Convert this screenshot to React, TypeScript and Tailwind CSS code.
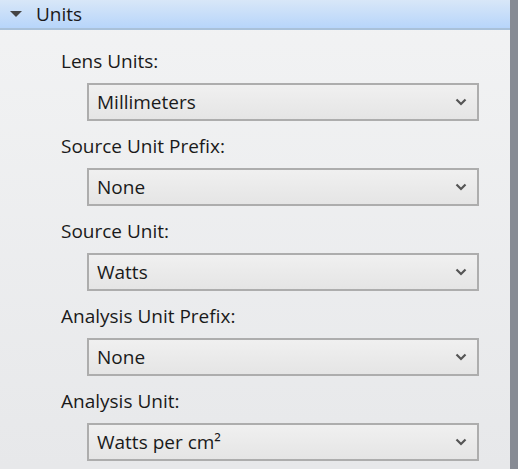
import React from 'react';

const fields = [
  { label: 'Lens Units:', value: 'Millimeters' },
  { label: 'Source Unit Prefix:', value: 'None' },
  { label: 'Source Unit:', value: 'Watts' },
  { label: 'Analysis Unit Prefix:', value: 'None' },
  { label: 'Analysis Unit:', value: 'Watts per cm²' },
];

function Chevron() {
  return (
    <svg width="12" height="8" viewBox="0 0 12 8" className="shrink-0">
      <path d="M1.5 1.5 L6 6 L10.5 1.5" fill="none" stroke="#555" strokeWidth="2.2" />
    </svg>
  );
}

export default function App() {
  return (
    <div
      className="flex h-[469px] w-[518px] overflow-hidden text-[#1a1a1a]"
      style={{ fontFamily: '"Open Sans", "Noto Sans", sans-serif' }}
    >
      <div className="flex min-w-0 flex-1 flex-col bg-gradient-to-b from-[#f2f3f4] to-[#e7e8ea]">
        {/* header */}
        <div className="flex h-[30px] shrink-0 items-center border-b-2 border-[#a9c1d9] bg-gradient-to-b from-[#d8e7f8] to-[#b7d5fa]">
          <svg width="12" height="6" viewBox="0 0 12 6" className="ml-[10px]">
            <path d="M0 0 L12 0 L6 6 Z" fill="#444" />
          </svg>
          <span className="ml-[14px] text-[19px] leading-none">Units</span>
        </div>

        <div className="flex shrink-0 flex-col pl-[61px] pr-[31px] pt-[19px]">
          {fields.map((f) => (
            <div key={f.label} className="flex flex-col">
              <div className="h-[25px] text-[19px] leading-[25px]">{f.label}</div>
              <div className="ml-[26px] mt-[9px] mb-[13px] flex h-[38px] items-center justify-between border-2 border-[#adadad] bg-gradient-to-b from-[#f0f0f0] to-[#e5e5e5] pl-[8px] pr-[10px]">
                <span className="text-[19px]">{f.value}</span>
                <Chevron />
              </div>
            </div>
          ))}
        </div>
      </div>
      <div className="w-[8px] shrink-0 bg-[#878b94]" />
    </div>
  );
}
